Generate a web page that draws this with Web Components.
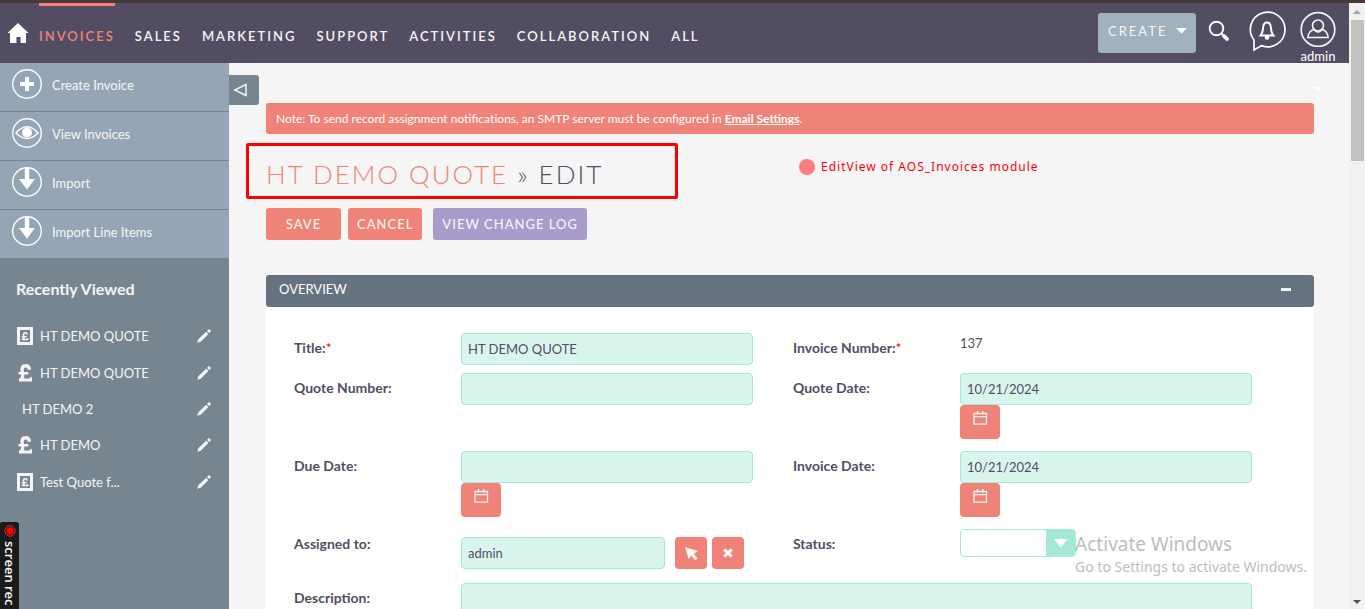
<!DOCTYPE html>
<html lang="en">
<head>
<meta charset="utf-8">
<title>HT DEMO QUOTE » Edit</title>
<style>
  body { margin: 0; font-family: Lato, "Liberation Sans", sans-serif; font-size: 13px; line-height: 20px; color: #534d64; background: #f5f5f5; }
</style>
</head>
<body>
<crm-app></crm-app>
<script>
const define = (name, html, setup) => {
  const template = document.createElement('template');
  template.innerHTML = html;
  customElements.define(name, class extends HTMLElement {
    constructor() {
      super();
      this.attachShadow({ mode: 'open' }).append(template.content.cloneNode(true));
    }
    connectedCallback() { if (setup) setup(this, this.shadowRoot); }
  });
};

const icons = {
  plus: '<circle cx="15" cy="15" r="14.3" fill="none" stroke="#fff" stroke-width="1.4"/><path d="M15 8v14M8 15h14" stroke="#fff" stroke-width="4"/>',
  eye: '<circle cx="15" cy="15" r="14.3" fill="none" stroke="#fff" stroke-width="1.4"/><path d="M4 15Q15 2.500 26 15Q15 26 4 15Z" fill="none" stroke="#fff" stroke-width="1.500"/><circle cx="15" cy="14.500" r="5" fill="#fff"/>',
  down: '<circle cx="15" cy="15" r="14.300" fill="none" stroke="#fff" stroke-width="1.4"/><path d="M12.800 .5h4.400V12H23L15 22.500 7 12h5.800z" fill="#fff"/>',
  pound: '<path d="M3 17.500h13v-4.200h-2.300v1.200H7.600c.8-1 .9-2.500.7-4h4V8H8C7.200 5.200 8 3.600 9.700 3.600c1.400 0 1.800.8 1.900 2.200h3.400C15 2 13 0 9.600 0 5.500 0 3.700 3 4.700 8H2.500v2.500h2.600c.2 1.900-.2 3.300-2.100 4z" fill="#f5f5f5"/>',
  invoice: '<path fill-rule="evenodd" d="M1 0h16v18H1zM4 3v12h10V3z" fill="#f5f5f5"/><path d="M5.800 13.300h6.600v-2.200h-1.200v.6H8.600c.3-.5.3-.9.200-1.400h2V8.900H8.500C8.200 7.300 8.500 6.600 9.300 6.600c.6 0 .8.400.8 1h1.800C12 6 11 4.900 9.300 4.900 7.200 4.900 6.300 6.300 6.700 8.900H5.700v1.400h1.200c0 .7-.2 1.200-1.100 1.500z" fill="#f5f5f5"/>',
  calendar: '<path d="M2 2.500h12.500v10.700H2zM2 5.700h12.500M5.500 0v3.800M11 0v3.800" fill="none" stroke="#f5f5f5" stroke-width="1.300"/>'
};

define('crm-icon', `
  <style>:host { display: block; flex: none; } svg { display: block; }</style>
  <svg aria-hidden="true"></svg>`, (el, root) => {
  const svg = root.querySelector('svg');
  const size = el.getAttribute('size');
  svg.setAttribute('width', size);
  svg.setAttribute('height', size);
  svg.setAttribute('viewBox', `0 0 ${size} ${size}`);
  svg.innerHTML = icons[el.getAttribute('name')];
});

const prependIcon = (target, name, size) => {
  const icon = document.createElement('crm-icon');
  icon.setAttribute('size', size);
  icon.setAttribute('name', name);
  target.prepend(icon);
};

define('nav-bar', `
  <style>
    :host { display: flex; height: 60px; background: #534d64; color: #f5f5f5; padding: 0 12px 0 7px; box-sizing: border-box; }
    .home { margin-top: 19px; width: 22px; height: 22px; }
    nav { display: flex; gap: 20px; margin-left: 10px; }
    nav a { color: inherit; text-decoration: none; letter-spacing: 2px; font-weight: 600; border-top: 3px solid transparent; padding-top: 20px; white-space: nowrap; }
    nav a.on { color: #f08377; border-color: #f08377; }
    .tools { margin-left: auto; display: flex; align-items: flex-start; }
    button { font: inherit; color: inherit; border: 0; background: none; padding: 0; }
    .create { display: flex; align-items: center; justify-content: space-between; width: 98px; height: 40px; margin-top: 10px; padding: 0 9px 4px 10px; box-sizing: border-box; background: #a1b1be; border-radius: 3px; letter-spacing: 2px; }
    .create svg { margin: 0; }
    .search { margin: 17px 0 0 12px; }
    .bell { margin: 7px 0 0 18px; }
    .user { margin: 8px 0 0 13px; width: 38px; line-height: 18px; font-weight: 500; text-align: center; }
    svg { display: block; margin: auto; }
  </style>
  <a class="home" href="#" aria-label="Home"><svg width="22" height="22"><path d="M11 1 L21.500 11H19v10h-5.500v-6h-4v6H3V11H.5z" fill="#fff"/></svg></a>
  <nav>
    <a class="on" href="#">INVOICES</a><a href="#">SALES</a><a href="#">MARKETING</a><a href="#">SUPPORT</a><a href="#">ACTIVITIES</a><a href="#">COLLABORATION</a><a href="#">ALL</a>
  </nav>
  <div class="tools">
    <button class="create">CREATE <svg width="11" height="6"><path d="M0 0h11L5.500 5.500z" fill="#fff"/></svg></button>
    <button class="search" aria-label="Search"><svg width="22" height="22"><circle cx="8.500" cy="8.500" r="6.800" fill="none" stroke="#fff" stroke-width="1.900"/><path d="M13.500 13.500l1.500 1.500" stroke="#fff" stroke-width="2"/><path d="M16 16l3 3" stroke="#fff" stroke-width="3.800" stroke-linecap="round"/></svg></button>
    <button class="bell" aria-label="Notifications"><svg width="38" height="42" fill="none" stroke="#fff" stroke-width="1.700"><path d="M6 30V40L13.500 35.600A17.300 17.300 0 1 0 6 30Z"/><path d="M12.700 25.500c2.200-2.500 2-4.500 2.400-8 .3-3.300 1.600-5 3.900-5s3.600 1.700 3.900 5c.4 3.500.2 5.500 2.400 8z" stroke-width="2"/><circle cx="19" cy="27.500" r="2.300" fill="#fff" stroke="none"/></svg></button>
    <button class="user"><svg width="36" height="36" fill="none" stroke="#f5f5f5"><circle cx="18" cy="18.500" r="16.800" stroke-width="1.700"/><circle cx="18" cy="14.500" r="5.500" stroke-width="1.700"/><path d="M14 18.500c-4 1-5.700 3.300-6.200 8h20.400c-.5-4.700-2.200-7-6.200-8-2 3.500-6 3.500-8 0z" stroke-width="1.500"/></svg>admin</button>
  </div>`);

define('side-action', `
  <style>
    :host { display: block; border-bottom: 1px solid #778591; background: #95a5b5; }
    a { display: flex; gap: 10px; padding: 6px 12px 12px; color: #f5f5f5; text-decoration: none; line-height: 32px; height: 30px; }
  </style>
  <a href="#"><slot></slot></a>`, (el, root) => prependIcon(root.querySelector('a'), el.getAttribute('icon'), 30));

define('recent-item', `
  <style>
    :host { display: flex; align-items: center; height: 37px; padding: 0 18px 0 16px; }
    :host(:not([icon])) { height: 35px; padding-left: 22px; }
    a { color: #f5f5f5; text-decoration: none; }
    .name { display: flex; flex: 1; align-items: center; gap: 6px; }
    svg { display: block; }
  </style>
  <a class="name" href="#"><slot></slot></a>
  <a href="#" aria-label="Edit"><svg width="14" height="14" fill="#f5f5f5"><path d="M.2 13.800L1.300 10.300 9.200 2.700 11.400 5 3.700 12.700zM10 1.900l1.300-1.400q.7-.6 1.400.1l.8.800q.5.600 0 1.300l-1.200 1.400z"/></svg></a>`, (el, root) => {
  if (el.hasAttribute('icon')) prependIcon(root.querySelector('.name'), el.getAttribute('icon'), 18);
});

define('side-bar', `
  <style>
    :host { display: block; background: #778591; }
    h2 { margin: 0; padding: 20px 16px 18px; font-size: 16px; line-height: 20px; font-weight: 700; color: #f5f5f5; }
  </style>
  <side-action icon="plus">Create Invoice</side-action>
  <side-action icon="eye">View Invoices</side-action>
  <side-action icon="down">Import</side-action>
  <side-action icon="down">Import Line Items</side-action>
  <h2>Recently Viewed</h2>
  <recent-item icon="invoice">HT DEMO QUOTE</recent-item>
  <recent-item icon="pound">HT DEMO QUOTE</recent-item>
  <recent-item>HT DEMO 2</recent-item>
  <recent-item icon="pound">HT DEMO</recent-item>
  <recent-item icon="invoice">Test Quote f...</recent-item>`);

define('action-button', `
  <style>
    :host { display: block; }
    button { display: block; width: 100%; height: 32px; padding: 0 9px; border: 0; border-radius: 3px; background: var(--tone, #f08377); color: #f5f5f5; font: inherit; font-weight: 500; letter-spacing: 1px; white-space: nowrap; }
  </style>
  <button type="button"><slot></slot></button>`);

const controls = {
  text: '<input id="c" type="text">',
  date: '<input id="c" type="text"><button type="button" class="cal" aria-label="Pick a date"><crm-icon name="calendar" size="16"></crm-icon></button>',
  static: '<output id="c"></output>',
  relate: `<div class="relate"><input id="c" type="text">
    <button type="button" aria-label="Select"><svg width="14" height="16" fill="#f5f5f5"><path d="M1 2L14 6 10 8.800 13.500 13.500 11 15.500 7.500 10.700 4.500 14z"/></svg></button>
    <button type="button" aria-label="Clear"><svg width="10" height="10"><path d="M1.300 1.300l7.400 7.400M8.700 1.300L1.300 8.700" stroke="#f5f5f5" stroke-width="3.200"/></svg></button></div>`,
  select: '<span class="pick"><select id="c"><option></option></select><svg width="14" height="9"><path d="M0 0h13.500L6.800 8.500z" fill="#fff"/></svg></span>',
  area: '<textarea id="c" rows="4"></textarea>'
};

define('form-field', `
  <style>
    :host { display: grid; grid-template-columns: 167px 1fr; padding-right: 40px; align-items: start; }
    :host([kind="area"]) { grid-column: 1 / -1; }
    label { line-height: 30px; font-size: 14px; font-weight: 700; }
    .req { color: #f00; font-weight: 400; }
    input, textarea { display: block; width: 100%; box-sizing: border-box; height: 32px; padding: 0 6px; border: 1px solid #a5e8d6; border-radius: 4px; background: #d8f5ee; color: #534d64; font: inherit; outline: 0; }
    textarea { height: 96px; resize: none; }
    button { display: flex; align-items: center; justify-content: center; width: 32px; height: 32px; padding: 0; border: 0; border-radius: 4px; background: #f08377; flex: none; }
    .cal { width: 40px; height: 34px; padding-bottom: 6px; }
    .relate { display: flex; padding-top: 8px; }
    .relate input { flex: 1; min-width: 0; margin-right: 10px; }
    .relate button { margin-right: 5px; }
    .relate button:last-child { margin-right: 9px; }
    .pick { display: grid; width: 116px; }
    .pick > * { grid-area: 1 / 1; }
    select { appearance: none; width: 116px; height: 28px; border: 1px solid #a5e8d6; border-radius: 4px; background: linear-gradient(#a5e8d6, #a5e8d6) right / 29px 100% no-repeat #fff; font: inherit; }
    .pick svg { justify-self: end; align-self: center; margin-right: 8px; pointer-events: none; }
  </style>
  <label for="c"></label>
  <div class="control"></div>`, (el, root) => {
  const kind = el.getAttribute('kind') || 'text';
  const label = root.querySelector('label');
  label.textContent = el.getAttribute('label');
  if (el.hasAttribute('required')) {
    const star = document.createElement('span');
    star.className = 'req';
    star.textContent = '*';
    label.append(star);
  }
  root.querySelector('.control').innerHTML = controls[kind];
  if (el.hasAttribute('value')) root.getElementById('c').value = el.getAttribute('value');
});

define('form-panel', `
  <style>
    :host { display: block; background: #fff; border-radius: 3px 3px 0 0; }
    header { display: flex; justify-content: space-between; height: 32px; line-height: 28px; padding: 0 23px 0 13px; box-sizing: border-box; background: #66727f; color: #fff; border-radius: 3px; }
    h3 { margin: 0; font: inherit; }
    button { border: 0; padding: 0; width: 10px; height: 3px; margin-top: 13px; background: #f5f5f5; }
    .grid { display: grid; grid-template-columns: 1fr 1fr; grid-template-rows: 40px 78px 78px 54px auto; padding: 26px 22px 26px 28px; }
  </style>
  <header><h3><slot name="title"></slot></h3><button type="button" aria-label="Collapse"></button></header>
  <div class="grid"><slot></slot></div>`);

define('edit-view', `
  <style>
    :host { display: block; position: relative; padding: 40px 35px 0 37px; }
    .toggle { position: absolute; left: 0; top: 12px; width: 30px; height: 30px; border: 0; padding: 0 8px 0 0; border-radius: 0 3px 3px 0; background: #778591; display: flex; align-items: center; justify-content: center; }
    .caret { position: absolute; right: 26px; top: 24px; }
    .note { margin: 0; padding: 0 10px; height: 31px; line-height: 31px; font-size: 12px; background: #f08377; color: #fff; border-radius: 3px; }
    .note a { color: inherit; font-weight: 700; }
    .head { display: flex; align-items: center; margin: 9px 0 9px -20px; }
    h1 { margin: 0; box-sizing: border-box; width: 432px; height: 56px; padding: 0 17px; line-height: 56px; border: 3px solid #f00; border-radius: 2px; font-size: 26px; font-weight: 300; letter-spacing: 2px; white-space: nowrap; }
    h1 a { color: #f08377; text-decoration: none; }
    .mark { display: flex; align-items: center; gap: 6px; margin: 0 0 8px 121px; color: #f00; font: 12px/20px "Noto Sans", sans-serif; letter-spacing: 1px; white-space: nowrap; }
    .mark i { width: 16px; height: 16px; border-radius: 50%; background: #fc7e7e; }
    .actions { display: flex; margin-bottom: 35px; }
    .save { width: 75px; margin-right: 7px; }
    .log { margin-left: 11px; --tone: #a99bcb; }
  </style>
  <button class="toggle" aria-label="Toggle sidebar"><svg width="15" height="14"><path d="M13 1.500v11L1.800 7z" fill="none" stroke="#f5f5f5" stroke-width="1.500"/></svg></button>
  <svg class="caret" width="10" height="5"><path d="M0 0h10L5 4.500z" fill="#fff"/></svg>
  <p class="note">Note: To send record assignment notifications, an SMTP server must be configured in <a href="#">Email Settings</a>.</p>
  <div class="head">
    <h1><a href="#">HT DEMO QUOTE</a> » EDIT</h1>
    <div class="mark"><i></i>EditView of AOS_Invoices module</div>
  </div>
  <div class="actions">
    <action-button class="save">SAVE</action-button>
    <action-button>CANCEL</action-button>
    <action-button class="log">VIEW CHANGE LOG</action-button>
  </div>
  <form-panel>
    <span slot="title">OVERVIEW</span>
    <form-field label="Title:" required value="HT DEMO QUOTE"></form-field>
    <form-field label="Invoice Number:" required kind="static" value="137"></form-field>
    <form-field label="Quote Number:"></form-field>
    <form-field label="Quote Date:" kind="date" value="10/21/2024"></form-field>
    <form-field label="Due Date:" kind="date"></form-field>
    <form-field label="Invoice Date:" kind="date" value="10/21/2024"></form-field>
    <form-field label="Assigned to:" kind="relate" value="admin"></form-field>
    <form-field label="Status:" kind="select"></form-field>
    <form-field label="Description:" kind="area"></form-field>
  </form-panel>`);

define('scroll-rail', `
  <style>
    :host { display: flex; flex-direction: column; align-items: center; background: #f1f1f1; padding: 7px 0 5px; box-sizing: border-box; }
    i { width: 13px; height: 141px; background: #c1c1c1; margin: 6px 0 auto 1px; }
    svg { display: block; }
  </style>
  <svg width="8" height="4"><path d="M0 4h8L4 0z" fill="#a3a3a3"/></svg><i></i>
  <svg width="8" height="4"><path d="M0 0h8L4 4z" fill="#505050"/></svg>`);

define('screen-recorder', `
  <style>
    :host { position: absolute; left: 0; bottom: 0; width: 19px; height: 87px; background: #1a1a1a; border-radius: 2px 3px 0 0; color: #f5f5f5; font: 600 13px/19px "Open Sans", sans-serif; }
    svg { display: block; margin: 3px 0 4px 4px; }
    span { display: block; writing-mode: vertical-rl; white-space: nowrap; }
  </style>
  <svg width="12" height="12"><circle cx="6" cy="6" r="5.200" fill="none" stroke="#c33"/><circle cx="6" cy="6" r="3.800" fill="#f00"/></svg>
  <span>screen rec</span>`);

define('system-watermark', `
  <style>
    :host { position: absolute; right: 58px; bottom: 32px; color: #bdbdbd; font: 14px/20px "Noto Sans", sans-serif; white-space: nowrap; pointer-events: none; }
    strong { display: block; font-size: 19px; line-height: 26px; font-weight: 400; }
  </style>
  <strong>Activate Windows</strong>Go to Settings to activate Windows.`);

define('crm-app', `
  <style>
    :host { display: grid; position: relative; height: 100vh; overflow: hidden; box-sizing: border-box; border-top: 3px solid #483838; grid-template: 60px minmax(0, 1fr) / 229px minmax(0, 1fr) 16px; }
    nav-bar { grid-column: 1 / 3; }
    scroll-rail { grid-area: 1 / 3 / 3 / 4; }
    side-bar, edit-view { grid-row: 2; }
  </style>
  <nav-bar></nav-bar>
  <side-bar></side-bar>
  <edit-view></edit-view>
  <scroll-rail></scroll-rail>
  <screen-recorder></screen-recorder>
  <system-watermark></system-watermark>`);
</script>
</body>
</html>
